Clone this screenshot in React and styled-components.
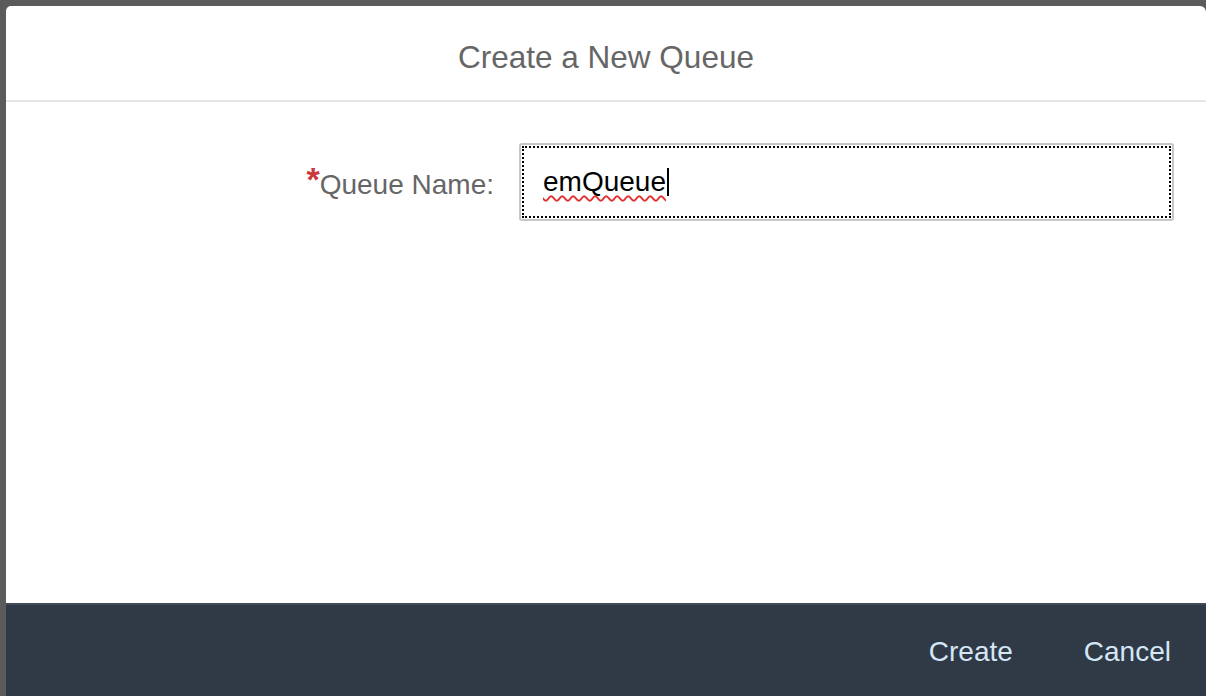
import React from 'react';
import styled, { createGlobalStyle } from 'styled-components';

const Global = createGlobalStyle`
  html, body {
    margin: 0;
    padding: 0;
    background: #5b5b5b;
    font-family: "Liberation Sans", Arial, sans-serif;
  }
`;

const Screen = styled.div`
  width: 1206px;
  height: 696px;
  overflow: hidden;
  padding: 6px 0 0 6px;
  box-sizing: border-box;
  background: #5b5b5b;
`;

const Dialog = styled.div`
  width: 1200px;
  height: 700px;
  background: #fff;
  border-radius: 5px 6px 0 0;
  display: flex;
  flex-direction: column;
  overflow: hidden;
`;

const Header = styled.div`
  flex: none;
  height: 96px;
  box-sizing: border-box;
  border-bottom: 2px solid #e6e6e6;
  display: flex;
  align-items: center;
  justify-content: center;
  padding-top: 8px;
`;

const Title = styled.h1`
  margin: 0;
  font-size: 31.5px;
  font-weight: normal;
  color: #666;
`;

const Body = styled.div`
  flex: 1;
  padding-top: 41px;
`;

const FieldRow = styled.div`
  display: grid;
  grid-template-columns: 488px 655px;
  column-gap: 25px;
  align-items: center;
`;

const Label = styled.label`
  text-align: right;
  font-size: 28px;
  color: #666;
`;

const Required = styled.span`
  color: #c9393b;
  font-size: 34px;
  font-weight: bold;
  position: relative;
  top: -3px;
`;

const InputBox = styled.div`
  height: 78px;
  box-sizing: border-box;
  border: 2px solid #c6c6c6;
  border-radius: 3px;
  padding: 1px;
`;

const Focus = styled.div`
  height: 100%;
  box-sizing: border-box;
  border: 2px dotted #000;
  display: flex;
  align-items: center;
  padding-left: 19px;
  font-size: 28px;
  color: #000;
`;

const Typed = styled.span`
  text-decoration: underline wavy #e03030;
  text-decoration-thickness: 1.5px;
  text-decoration-skip-ink: none;
  text-underline-offset: 4px;
`;

const Caret = styled.span`
  display: inline-block;
  width: 2px;
  height: 28px;
  background: #000;
  margin-left: 1px;
`;

const Footer = styled.div`
  height: 103px;
  flex: none;
  background: #2f3a46;
  border-top: 2px solid #414c58;
  display: flex;
  justify-content: flex-end;
  align-items: flex-start;
  gap: 71px;
  padding: 31px 35px 0 0;
  box-sizing: border-box;
`;

const FooterButton = styled.button`
  background: none;
  border: none;
  padding: 0;
  font-family: "Liberation Sans", Arial, sans-serif;
  font-size: 28px;
  color: #d5e6f7;
  cursor: pointer;
`;

export default function App() {
  return (
    <>
      <Global />
      <Screen>
        <Dialog>
          <Header>
            <Title>Create a New Queue</Title>
          </Header>
          <Body>
            <FieldRow>
              <Label>
                <Required>*</Required>Queue Name:
              </Label>
              <InputBox>
                <Focus>
                  <Typed>emQueue</Typed>
                  <Caret />
                </Focus>
              </InputBox>
            </FieldRow>
          </Body>
          <Footer>
            <FooterButton>Create</FooterButton>
            <FooterButton>Cancel</FooterButton>
          </Footer>
        </Dialog>
      </Screen>
    </>
  );
}
